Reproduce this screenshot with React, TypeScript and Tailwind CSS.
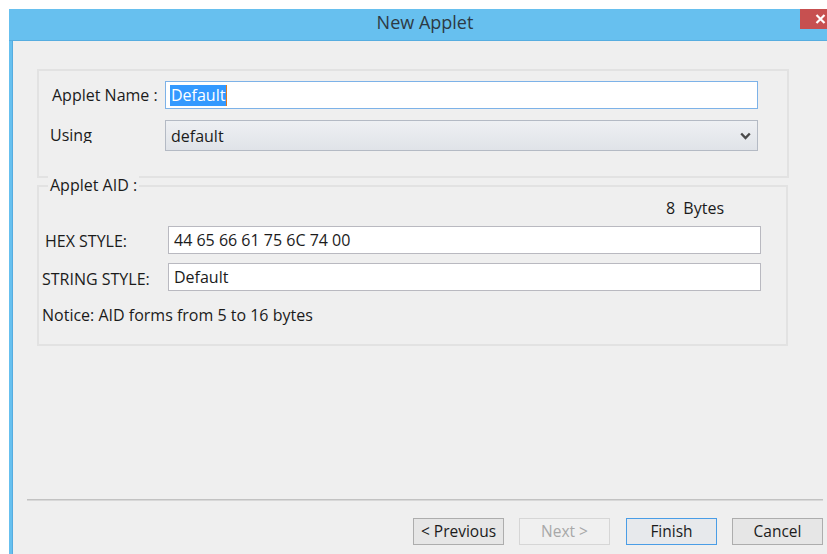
import React from "react";

const font = { fontFamily: '"Open Sans", "Noto Sans", "Liberation Sans", sans-serif' };

function Button({
  children,
  variant = "normal",
}: {
  children: React.ReactNode;
  variant?: "normal" | "default" | "disabled";
}) {
  const cls =
    variant === "disabled"
      ? "border-[#d6d6d6] bg-[#f0f0f0] text-[#a8a8a8]"
      : variant === "default"
        ? "border-[#4a9de6] bg-[#e7e9ec] text-[#1b1b1b]"
        : "border-[#adadad] bg-[#e6e6e6] text-[#1b1b1b]";
  return (
    <button
      className={`flex h-[27px] w-[91px] items-center justify-center border text-[15.5px] leading-none ${cls}`}
    >
      {children}
    </button>
  );
}

export default function App() {
  return (
    <div
      className="relative h-[554px] w-[827px] overflow-hidden bg-white text-[#1b1b1b]"
      style={font}
    >
      <div className="ml-[9px] mt-[9px] flex h-[545px] flex-col">
        {/* title bar */}
        <div className="relative flex h-[32px] shrink-0 items-center justify-center border-b border-[#56ade0] bg-[#67c0ef] pl-[14px]">
          <span className="-mt-[4px] text-[18px] text-[#2d3a44]">New Applet</span>
          <div className="absolute right-[-14px] top-0 flex h-[20px] w-[41px] items-center justify-center bg-[#c75050]">
            <svg width="11" height="10" viewBox="0 0 11 10">
              <path d="M1.5 1 L9.5 9 M9.5 1 L1.5 9" stroke="white" strokeWidth="2.2" />
            </svg>
          </div>
        </div>

        {/* body */}
        <div className="flex flex-1 border-l-[3px] border-[#67c0ef]">
          <div className="flex flex-1 flex-col border-l border-[#55ace0] bg-[#efefef] text-[16px]">
            <div className="ml-[24px] mt-[28px] flex flex-col">
              {/* applet name / using */}
              <div className="flex h-[109px] w-[752px] flex-col border-2 border-[#e2e2e2] pt-[10px]">
                <div className="flex h-[28px] items-center">
                  <div className="w-[126px] pl-[13px]">Applet Name :</div>
                  <div className="flex h-[28px] w-[593px] items-center border border-[#7db2e8] bg-white pl-[4px]">
                    <span className="bg-[#3399ff] px-[1px] leading-[21px] text-white">Default</span>
                    <span className="h-[21px] w-[1px] bg-[#e07a1f]" />
                  </div>
                </div>
                <div className="mt-[11px] flex h-[31px] items-center">
                  <div className="w-[126px] pl-[11px]">
                    {/* label box is shorter than the line, so the descender gets clipped */}
                    <div className="-mt-[4px] h-[18px] overflow-hidden leading-[20px]">Using</div>
                  </div>
                  <div className="flex h-[31px] w-[593px] items-center justify-between border border-[#b4bac4] bg-gradient-to-b from-[#eef0f3] to-[#e0e3e8] pl-[5px] pr-[6px]">
                    <span>default</span>
                    <svg width="11" height="8" viewBox="0 0 11 8">
                      <path d="M1.2 1.5 L5.5 6 L9.8 1.5" fill="none" stroke="#4a4a4a" strokeWidth="2.4" />
                    </svg>
                  </div>
                </div>
              </div>

              {/* applet AID */}
              <div className="relative mt-[7px] h-[161px] w-[751px] border-2 border-[#e2e2e2]">
                <span className="absolute left-[9px] top-[-12px] bg-[#efefef] px-[2px] leading-[20px]">
                  Applet AID :
                </span>
                <div className="mt-[11px] flex h-[20px] items-center justify-end pr-[62px]">
                  8&nbsp;&nbsp;Bytes
                </div>
                <div className="mt-[8px] flex h-[28px] items-center">
                  <div className="w-[129px] pl-[6px] pt-[2px]">HEX STYLE:</div>
                  <div className="flex h-[28px] w-[593px] items-center border border-[#b9b9c0] bg-white pl-[5px]">
                    44 65 66 61 75 6C 74 00
                  </div>
                </div>
                <div className="mt-[9px] flex h-[28px] items-center">
                  <div className="w-[129px] pl-[3px] pt-[4px]">STRING STYLE:</div>
                  <div className="flex h-[28px] w-[593px] items-center border border-[#b9b9c0] bg-white pl-[5px]">
                    Default
                  </div>
                </div>
                <div className="mt-[14px] pl-[3px] leading-[20px]">
                  Notice: AID forms from 5 to 16 bytes
                </div>
              </div>
            </div>

            {/* footer */}
            <div className="mt-auto flex flex-col pb-[9px]">
              <div className="ml-[14px] h-[2px] w-[796px] border-t border-b border-t-[#c2c2c2] border-b-[#d8d8d8]" />
              <div className="mt-[17px] flex justify-end gap-[15px] pr-[4px]">
                <Button>&lt; Previous</Button>
                <Button variant="disabled">Next &gt;</Button>
                <div className="ml-[1px]">
                  <Button variant="default">Finish</Button>
                </div>
                <Button>Cancel</Button>
              </div>
            </div>
          </div>
        </div>
      </div>
    </div>
  );
}
